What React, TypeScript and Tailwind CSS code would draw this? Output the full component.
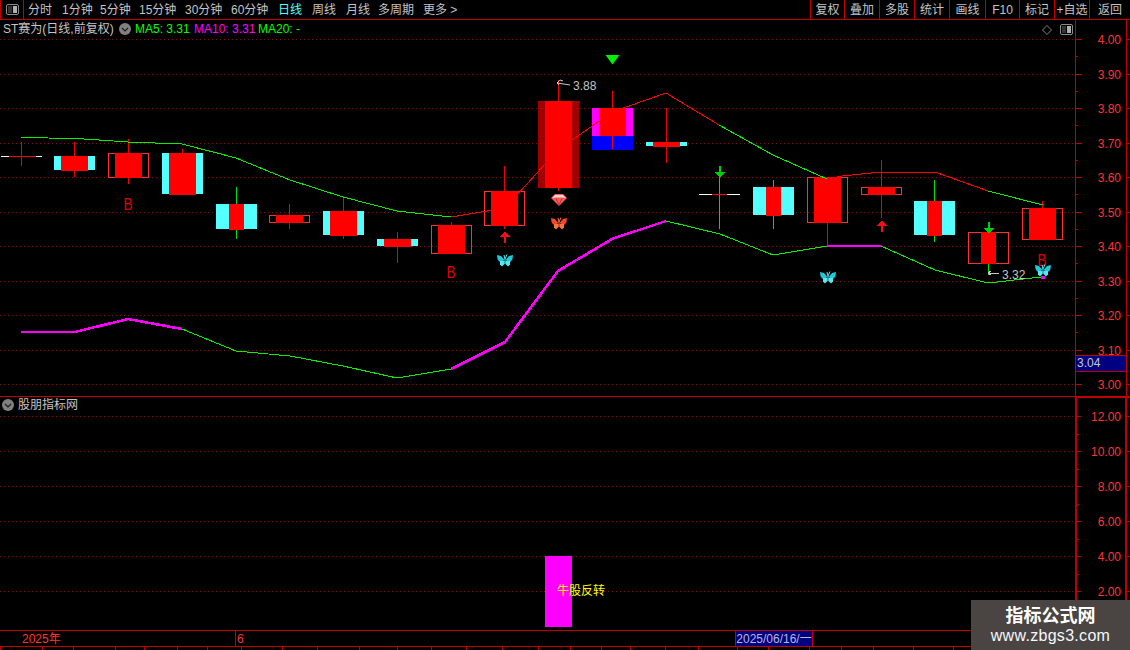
import React from "react";

const RED = "#ff0000";
const LINE = "#c00000";
const AXIS = "#ff3232";
const CYAN = "#54ffff";
const GREEN = "#00f000";

type C = {
  x: number; // left of the 41px wide frame
  t: number;
  b: number;
  wt: number;
  wb: number;
  kind: "cyan" | "outline" | "dark" | "mag" | "doji";
  inner?: [number, number];
  wick?: string;
};

const candles: C[] = [
  { x: 1, t: 156, b: 157, wt: 142, wb: 166, kind: "doji", inner: [8, 35] },
  { x: 54, t: 156, b: 170, wt: 142, wb: 177, kind: "cyan" },
  { x: 108, t: 153, b: 178, wt: 139, wb: 184, kind: "outline" },
  { x: 162, t: 153, b: 194, wt: 149, wb: 195, kind: "cyan" },
  { x: 216, t: 204, b: 229, wt: 187, wb: 239, kind: "cyan", inner: [13, 28], wick: "#00e000" },
  { x: 269, t: 215, b: 223, wt: 204, wb: 229, kind: "outline" },
  { x: 323, t: 211, b: 235, wt: 197, wb: 239, kind: "cyan" },
  { x: 377, t: 239, b: 246, wt: 232, wb: 263, kind: "cyan" },
  { x: 431, t: 225, b: 254, wt: 222, wb: 254, kind: "outline" },
  { x: 484, t: 191, b: 226, wt: 166, wb: 229, kind: "outline" },
  { x: 538, t: 101, b: 188, wt: 80, wb: 191, kind: "dark" },
  { x: 592, t: 108, b: 150, wt: 91, wb: 149, kind: "mag" },
  { x: 646, t: 142, b: 146, wt: 108, wb: 163, kind: "cyan" },
  { x: 699, t: 194, b: 195, wt: 177, wb: 229, kind: "doji", inner: [13, 28], wick: "#00e000" },
  { x: 753, t: 187, b: 215, wt: 180, wb: 229, kind: "cyan", inner: [13, 28], wick: "#00e000" },
  { x: 807, t: 177, b: 223, wt: 177, wb: 246, kind: "outline" },
  { x: 861, t: 187, b: 195, wt: 160, wb: 218, kind: "outline" },
  { x: 914, t: 201, b: 235, wt: 180, wb: 242, kind: "cyan", inner: [13, 28], wick: "#00e000" },
  { x: 968, t: 232, b: 264, wt: 232, wb: 275, kind: "outline", inner: [13, 28], wick: "#00e000" },
  { x: 1022, t: 208, b: 240, wt: 201, wb: 240, kind: "outline" },
];

function Candle({ c }: { c: C }) {
  const [a, e] = c.inner ?? [7, 34];
  const cx = c.x + 20;
  const h = c.b - c.t;
  return (
    <g shapeRendering="crispEdges">
      <rect x={cx} y={c.wt} width={1} height={c.wb - c.wt} fill={c.wick ?? "#f00000"} />
      {c.kind === "cyan" && <rect x={c.x} y={c.t} width={41} height={h} fill={CYAN} />}
      {c.kind === "dark" && <rect x={c.x} y={c.t} width={41} height={h} fill="#a00000" />}
      {c.kind === "mag" && (
        <>
          <rect x={c.x} y={c.t} width={41} height={28} fill="#ff00ff" />
          <rect x={c.x} y={c.t + 28} width={41} height={14} fill="#0000ff" />
        </>
      )}
      {c.kind === "outline" && (
        <rect x={c.x + 0.5} y={c.t + 0.5} width={40} height={h - 1} fill="none" stroke="#ff3232" />
      )}
      {c.kind === "doji" && <rect x={c.x} y={c.t} width={41} height={1} fill="#ffffff" />}
      <rect
        x={c.x + a}
        y={c.t}
        width={e - a}
        height={c.kind === "mag" ? 28 : c.kind === "cyan" ? h + 1 : h}
        fill={RED}
      />
      {c.kind === "mag" && <rect x={cx} y={c.t + 28} width={1} height={13} fill="#f00000" />}
    </g>
  );
}

type Seg = { color: string; w: number; pts: [number, number][] };

const segs: Seg[] = [
  {
    color: GREEN,
    w: 1,
    pts: [[21, 137], [48, 138], [84, 139], [128, 142], [182, 144], [236, 158], [290, 180], [343, 197], [397, 211], [451, 217]],
  },
  { color: RED, w: 1, pts: [[451, 217], [505, 208], [558, 150], [612, 112], [666, 93], [719, 125]] },
  { color: GREEN, w: 1, pts: [[719, 125], [773, 155], [827, 179]] },
  { color: RED, w: 1, pts: [[827, 179], [842, 176], [881, 172], [935, 172], [988, 191]] },
  { color: GREEN, w: 1, pts: [[988, 191], [1043, 205]] },
  { color: "#ff00ff", w: 2.5, pts: [[21, 332], [75, 332], [128, 319], [182, 329]] },
  { color: GREEN, w: 1, pts: [[182, 329], [236, 351], [290, 356], [343, 366], [397, 378], [451, 369]] },
  { color: "#ff00ff", w: 2.5, pts: [[451, 369], [505, 342], [558, 271], [612, 239], [666, 221]] },
  { color: GREEN, w: 1, pts: [[666, 221], [720, 234], [773, 255], [827, 246]] },
  { color: "#ff00ff", w: 2.5, pts: [[827, 246], [881, 246]] },
  { color: GREEN, w: 1, pts: [[881, 246], [935, 270], [988, 283], [1041, 277]] },
  { color: "#ff00ff", w: 2.5, pts: [[1041, 277.5], [1045, 277.5]] },
];

function Butterfly({ x, y, color, dark }: { x: number; y: number; color: string; dark: string }) {
  return (
    <g transform={`translate(${x - 8} ${y - 6})`}>
      <path d="M7.5 6 L4 2 L0 1 L0.5 5 L2 7.5 L5 7.5 Z" fill={color} />
      <path d="M8.5 6 L12 2 L16 1 L15.5 5 L14 7.5 L11 7.5 Z" fill={color} />
      <path d="M7.5 7 L3 7 L3 10.5 L5 12.5 L7.5 10 Z" fill={dark} />
      <path d="M8.5 7 L13 7 L13 10.5 L11 12.5 L8.5 10 Z" fill={dark} />
      <path d="M8 10 L8 5 L10 0.5 M8 5 L7 1" stroke={dark} strokeWidth="1" fill="none" />
    </g>
  );
}

function Gem({ x, y }: { x: number; y: number }) {
  return (
    <g transform={`translate(${x} ${y})`}>
      <path d="M-8 4 L-4 0 L4 0 L8 4 L0 12 Z" fill="#f25c5c" />
      <path d="M-7 4 L-4 1 L4 1 L7 4 L3 3.5 L-3 3.5 Z" fill="#ffd0d0" />
      <path d="M-3 4.5 L0 11 L3 4.5" fill="none" stroke="#d82c2c" strokeWidth="1" />
    </g>
  );
}

function ArrowUp({ x, y, color }: { x: number; y: number; color: string }) {
  return (
    <g shapeRendering="crispEdges" fill={color}>
      <path d={`M${x} ${y} L${x + 5} ${y + 6} L${x - 5} ${y + 6} Z`} />
      <rect x={x - 1} y={y + 6} width={2} height={6} />
    </g>
  );
}

function ArrowDown({ x, y, color }: { x: number; y: number; color: string }) {
  return (
    <g shapeRendering="crispEdges" fill={color}>
      <rect x={x - 1} y={y} width={2} height={6} />
      <path d={`M${x - 5} ${y + 6} L${x + 5} ${y + 6} L${x} ${y + 12} Z`} />
    </g>
  );
}

function Letter({ x, y }: { x: number; y: number }) {
  return (
    <text x={x} y={y} textAnchor="middle" fontSize={17} fill="#e00000" textLength={9} lengthAdjust="spacingAndGlyphs">
      B
    </text>
  );
}

function PanelIcon() {
  return (
    <svg width="13" height="11" viewBox="0 0 13 11" className="block">
      <rect x="0.5" y="0.5" width="12" height="10" rx="1.5" fill="none" stroke="#8a8a8a" />
      <rect x="2" y="2" width="4" height="7" fill="#333333" />
      <rect x="7" y="2" width="4" height="7" fill="#b0b0b0" />
    </svg>
  );
}

function ChevronDot() {
  return (
    <svg width="12" height="12" viewBox="0 0 12 12" className="block shrink-0">
      <circle cx="6" cy="6" r="6" fill="#808080" />
      <path d="M3 5 L6 8 L9 5" fill="none" stroke="#1c1c1c" strokeWidth="1.2" />
    </svg>
  );
}

const navItems = [
  { t: "分时", w: "w-[34px]" },
  { t: "1分钟", w: "w-[38px]" },
  { t: "5分钟", w: "w-[39px]" },
  { t: "15分钟", w: "w-[46px]" },
  { t: "30分钟", w: "w-[46px]" },
  { t: "60分钟", w: "w-[47px]" },
  { t: "日线", w: "w-[34px]", active: true },
  { t: "周线", w: "w-[34px]" },
  { t: "月线", w: "w-[32px]" },
  { t: "多周期", w: "w-[45px]" },
  { t: "更多 >", w: "w-[40px]" },
];

const toolItems = [
  { t: "复权", w: "w-[34px]" },
  { t: "叠加", w: "w-[35px]" },
  { t: "多股", w: "w-[35px]" },
  { t: "统计", w: "w-[35px]" },
  { t: "画线", w: "w-[36px]" },
  { t: "F10", w: "w-[34px]" },
  { t: "标记", w: "w-[35px]" },
  { t: "+自选", w: "w-[35px]" },
  { t: "返回", w: "w-[41px]" },
];

const mainGrid = Array.from({ length: 11 }, (_, i) => 39 + i * 34.5);
const mainLabels = ["4.00", "3.90", "3.80", "3.70", "3.60", "3.50", "3.40", "3.30", "3.20", "3.10", "3.00"];
const subGrid = Array.from({ length: 6 }, (_, i) => 416 + i * 35);
const subLabels = ["12.00", "10.00", "8.00", "6.00", "4.00", "2.00"];
const bottomCells = [42, 31, 42, 29, 33, 30, 34, 41, 35, 42, 38, 34, 35, 36, 36, 32, 31, 29, 35, 33, 39, 31, 41, 32, 32, 40, 40, 40];

export default function App() {
  return (
    <div className="relative flex h-[650px] w-[1130px] flex-col overflow-hidden bg-black font-['Liberation_Sans','Noto_Sans_CJK_SC',sans-serif] text-[12px] leading-none text-[#c4c4c4]">
      {/* top bar */}
      <div className="flex h-[20px] shrink-0 items-center border-b border-[#c00000]">
        <div className="flex h-full w-[24px] items-center justify-center border-x border-[#c00000]">
          <PanelIcon />
        </div>
        <div className="flex pl-[4px]">
          {navItems.map((n) => (
            <span key={n.t} className={`${n.w} whitespace-nowrap ${n.active ? "text-[#54ffff]" : ""}`}>
              {n.t}
            </span>
          ))}
        </div>
        <div className="ml-auto flex h-full">
          {toolItems.map((n) => (
            <span
              key={n.t}
              className={`${n.w} flex items-center justify-center whitespace-nowrap border-l border-[#c00000]`}
            >
              {n.t}
            </span>
          ))}
        </div>
      </div>

      {/* main chart */}
      <div className="relative flex h-[377px] shrink-0 border-b border-[#c00000]">
        <svg width="1075" height="376" viewBox="0 20 1075 376" className="block shrink-0">
          {mainGrid.map((y) => (
            <line
              key={y}
              x1="0"
              x2="1075"
              y1={Math.round(y) + 0.5}
              y2={Math.round(y) + 0.5}
              stroke="#7a1010"
              strokeDasharray="1 3"
              shapeRendering="crispEdges"
            />
          ))}
          {candles.map((c) => (
            <Candle key={c.x} c={c} />
          ))}
          {segs.map((s, i) => (
            <polyline
              key={i}
              points={s.pts.map((p) => p.join(",")).join(" ")}
              fill="none"
              stroke={s.color}
              strokeWidth={s.w}
              shapeRendering="crispEdges"
            />
          ))}
          <Letter x={128} y={210} />
          <Letter x={451} y={278} />
          <Letter x={1042} y={266} />
          <ArrowUp x={505} y={231} color="#f01010" />
          <ArrowUp x={882} y={220} color="#f01010" />
          <ArrowDown x={720} y={166} color="#00d000" />
          <ArrowDown x={989} y={222} color="#00d000" />
          <path d="M605.5 55 L619.5 55 L612.5 64.5 Z" fill="#00f000" />
          <Gem x={559} y={194} />
          <Butterfly x={559} y={223} color="#f04828" dark="#ff7040" />
          <Butterfly x={505} y={260} color="#20c8d8" dark="#54e8f0" />
          <Butterfly x={828} y={277} color="#20c8d8" dark="#54e8f0" />
          <Butterfly x={1043} y={270} color="#20c8d8" dark="#54e8f0" />
          <path d="M559 85 L557 83 L560 80 L563 81 M557 83 L570 85" fill="none" stroke="#c8c8c8" />
          <text x="573" y="90" fontSize="12" fill="#c4c4c4">3.88</text>
          <path d="M988 273 L999 273 M988 273 L991 271 M988 273 L991 275" fill="none" stroke="#c8c8c8" shapeRendering="crispEdges" />
          <text x="1002" y="279" fontSize="12" fill="#c4c4c4">3.32</text>
        </svg>
        <svg width="55" height="376" viewBox="1075 20 55 376" className="block shrink-0">
          <g shapeRendering="crispEdges" stroke={LINE}>
            <line x1="1075.5" x2="1075.5" y1="20" y2="396" />
            <line x1="1126.5" x2="1126.5" y1="20" y2="396" />
            {mainGrid.map((y) => (
              <g key={y}>
                <line x1="1075" x2="1081" y1={Math.round(y) + 0.5} y2={Math.round(y) + 0.5} />
                <line x1="1075" x2="1078" y1={Math.round(y + 17.25) + 0.5} y2={Math.round(y + 17.25) + 0.5} />
                <line x1="1127" x2="1130" y1={Math.round(y) + 0.5} y2={Math.round(y) + 0.5} />
              </g>
            ))}
          </g>
          {mainGrid.map((y, i) => (
            <text key={y} x="1121" y={y + 5} textAnchor="end" fontSize="12" fill={AXIS}>
              {mainLabels[i]}
            </text>
          ))}
          <rect x="1075.5" y="355.5" width="51" height="16" fill="#000080" stroke={LINE} shapeRendering="crispEdges" />
          <text x="1077" y="367" fontSize="12" fill="#c8c8c8">3.04</text>
        </svg>

        {/* legend */}
        <div className="absolute left-[3px] top-[3px] flex h-[12px] items-center whitespace-nowrap">
          <span className="w-[116px]">ST赛为(日线,前复权)</span>
          <ChevronDot />
          <span className="ml-[4px] w-[59px] text-[#00ff00]">MA5: 3.31</span>
          <span className="w-[64px] text-[#ff00ff]">MA10: 3.31</span>
          <span className="text-[#00ff00]">MA20: -</span>
        </div>
        <div className="absolute left-[1042px] top-[4px] flex items-center gap-[8px]">
          <svg width="10" height="10" viewBox="0 0 10 10" className="block">
            <path d="M5 0.5 L9.5 5 L5 9.5 L0.5 5 Z" fill="none" stroke="#808080" />
          </svg>
          <PanelIcon />
        </div>
      </div>

      {/* lower chart */}
      <div className="relative flex h-[234px] shrink-0 border-b border-[#c00000]">
        <svg width="1075" height="233" viewBox="0 397 1075 233" className="block shrink-0">
          {subGrid.map((y) => (
            <line
              key={y}
              x1="0"
              x2="1075"
              y1={y + 0.5}
              y2={y + 0.5}
              stroke="#7a1010"
              strokeDasharray="1 3"
              shapeRendering="crispEdges"
            />
          ))}
          <rect x="545" y="556" width="27" height="71" fill="#ff00ff" shapeRendering="crispEdges" />
          <text x="557" y="595" fontSize="12" fill="#ffff00">牛股反转</text>
        </svg>
        <svg width="55" height="233" viewBox="1075 397 55 233" className="block shrink-0">
          <g shapeRendering="crispEdges" stroke={LINE}>
            <line x1="1076" x2="1076" y1="397" y2="630" strokeWidth="2" />
            <line x1="1126" x2="1126" y1="397" y2="630" strokeWidth="2" />
            <line x1="1075" x2="1130" y1="397.5" y2="397.5" />
            {subGrid.map((y) => (
              <g key={y}>
                <line x1="1077" x2="1081" y1={y + 0.5} y2={y + 0.5} />
                <line x1="1077" x2="1079" y1={y + 18.5} y2={y + 18.5} />
                <line x1="1127" x2="1130" y1={y + 0.5} y2={y + 0.5} />
              </g>
            ))}
          </g>
          {subGrid.map((y, i) => (
            <text key={y} x="1121" y={y + 5} textAnchor="end" fontSize="12" fill={AXIS}>
              {subLabels[i]}
            </text>
          ))}
        </svg>
        <div className="absolute left-[2px] top-[2px] flex h-[12px] items-center gap-[4px] whitespace-nowrap">
          <ChevronDot />
          <span>股朋指标网</span>
        </div>
      </div>

      {/* date row */}
      <div className="flex h-[16px] shrink-0 items-center border-b border-[#c00000] text-[#ff3232]">
        <span className="w-[235px] pl-[22px]">2025年</span>
        <span className="flex h-full w-[500px] items-center border-l border-[#c00000] pl-[1px]">6</span>
        <span className="flex h-full w-[78px] items-center justify-center whitespace-nowrap border-x border-[#c00000] bg-[#000080] text-[#b8b8d8]">
          2025/06/16/一
        </span>
      </div>

      {/* clipped bottom row */}
      <div className="flex h-[3px] shrink-0">
        {bottomCells.map((w, i) => (
          <span key={i} className="h-full border-l border-[#c00000]" style={{ width: w }} />
        ))}
      </div>

      {/* watermark */}
      <div className="absolute bottom-0 right-0 flex h-[50px] w-[159px] flex-col items-center justify-center gap-[1px] bg-[#4a4442]">
        <span className="text-[18px] font-bold leading-[20px] text-white">指标公式网</span>
        <span className="text-[16px] leading-[18px] tracking-[0.3px] text-[#f4f8ff]">www.zbgs3.com</span>
      </div>
    </div>
  );
}
